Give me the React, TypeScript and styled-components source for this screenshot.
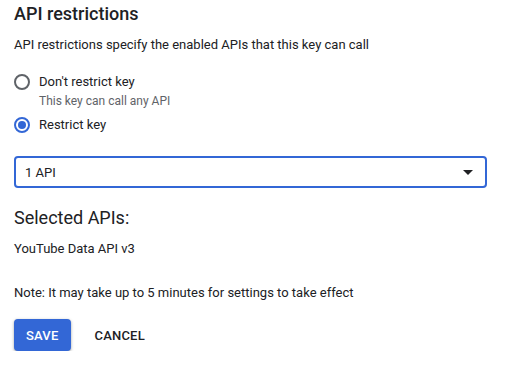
import React, { useState } from 'react';
import styled, { createGlobalStyle } from 'styled-components';

const GlobalStyle = createGlobalStyle`
  html, body {
    margin: 0;
    padding: 0;
    background: #ffffff;
  }
  body {
    font-family: Roboto, "Liberation Sans", Arial, sans-serif;
    color: #202124;
    -webkit-font-smoothing: antialiased;
  }
`;

const Page = styled.div`
  display: flex;
  flex-direction: column;
  padding: 2px 22px 0 14px;
  width: 509px;
  box-sizing: border-box;
`;

const Title = styled.h2`
  margin: 0;
  font-size: 18px;
  line-height: 24px;
  font-weight: 500;
  color: #202124;
`;

const Description = styled.p`
  margin: 9px 0 0;
  font-size: 13px;
  line-height: 20px;
  color: #202124;
`;

const RadioGroup = styled.div`
  display: flex;
  flex-direction: column;
  gap: 6px;
  margin-top: 17px;
`;

const RadioOption = styled.label`
  display: grid;
  grid-template-columns: 16px 1fr;
  column-gap: 9px;
  align-items: center;
  cursor: pointer;
`;

const RadioCircle = styled.span<{ $checked: boolean }>`
  position: relative;
  width: 16px;
  height: 16px;
  box-sizing: border-box;
  border-radius: 50%;
  border: 2px solid ${({ $checked }) => ($checked ? '#3367d6' : '#5f6368')};

  &::after {
    content: '';
    display: ${({ $checked }) => ($checked ? 'block' : 'none')};
    position: absolute;
    inset: 2px;
    border-radius: 50%;
    background: #3367d6;
  }
`;

const RadioLabel = styled.span`
  font-size: 13px;
  line-height: 20px;
  color: #202124;
`;

const RadioHint = styled.span`
  grid-column: 2;
  font-size: 12px;
  line-height: 16px;
  color: #5f6368;
  margin-top: 1px;
`;

const Select = styled.div`
  display: flex;
  align-items: center;
  justify-content: space-between;
  margin-top: 21px;
  height: 32px;
  box-sizing: border-box;
  border: 2px solid #3367d6;
  border-radius: 4px;
  padding: 0 12px 0 9px;
  font-size: 13px;
  color: #202124;
`;

const Arrow = styled.span`
  width: 0;
  height: 0;
  border-left: 5px solid transparent;
  border-right: 5px solid transparent;
  border-top: 5px solid #202124;
`;

const SubTitle = styled.h3`
  margin: 18px 0 0;
  font-size: 18px;
  line-height: 24px;
  font-weight: 400;
  color: #202124;
`;

const BodyText = styled.p<{ $gap: number }>`
  margin: ${({ $gap }) => $gap}px 0 0;
  font-size: 13px;
  line-height: 20px;
  color: #202124;
`;

const Actions = styled.div`
  display: flex;
  align-items: center;
  gap: 12px;
  margin-top: 16px;
`;

const Button = styled.button<{ $primary?: boolean }>`
  height: 32px;
  padding: 0 12px;
  border: none;
  border-radius: 4px;
  font-family: inherit;
  font-size: 13px;
  font-weight: 500;
  letter-spacing: 0.2px;
  text-transform: uppercase;
  cursor: pointer;
  background: ${({ $primary }) => ($primary ? '#3367d6' : 'transparent')};
  color: ${({ $primary }) => ($primary ? '#ffffff' : '#202124')};
  box-shadow: ${({ $primary }) =>
    $primary ? '0 1px 2px rgba(60,64,67,0.3), 0 1px 3px 1px rgba(60,64,67,0.15)' : 'none'};
`;

export default function App() {
  const [restricted, setRestricted] = useState(true);

  return (
    <Page>
      <GlobalStyle />
      <Title>API restrictions</Title>
      <Description>API restrictions specify the enabled APIs that this key can call</Description>
      <RadioGroup>
        <RadioOption onClick={() => setRestricted(false)}>
          <RadioCircle $checked={!restricted} />
          <RadioLabel>Don't restrict key</RadioLabel>
          <RadioHint>This key can call any API</RadioHint>
        </RadioOption>
        <RadioOption onClick={() => setRestricted(true)}>
          <RadioCircle $checked={restricted} />
          <RadioLabel>Restrict key</RadioLabel>
        </RadioOption>
      </RadioGroup>
      <Select>
        <span>1 API</span>
        <Arrow />
      </Select>
      <SubTitle>Selected APIs:</SubTitle>
      <BodyText $gap={9}>YouTube Data API v3</BodyText>
      <BodyText $gap={24}>Note: It may take up to 5 minutes for settings to take effect</BodyText>
      <Actions>
        <Button $primary>Save</Button>
        <Button>Cancel</Button>
      </Actions>
    </Page>
  );
}
